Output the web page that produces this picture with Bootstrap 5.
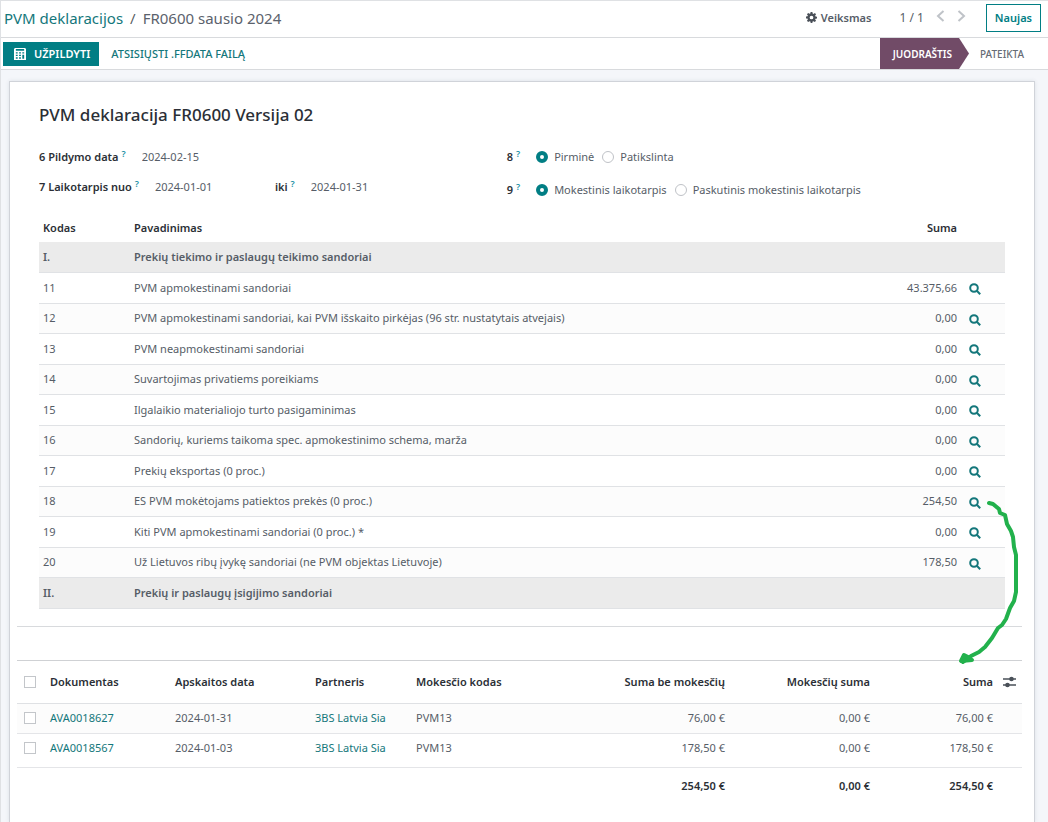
<!DOCTYPE html>
<html lang="lt">
<head>
<meta charset="utf-8">
<meta name="viewport" content="width=device-width, initial-scale=1">
<title>FR0600 sausio 2024</title>
<link href="https://cdn.jsdelivr.net/npm/bootstrap@5.3.0/dist/css/bootstrap.min.css" rel="stylesheet">
<style>
  :root { --teal: #017e84; --link: #14777b; --plum: #714b67; --ink: #2b2f36; --body: #565d67; --line: #d8dadd; }
  body { font-family: "Noto Sans", "Open Sans", sans-serif; font-size: 11px; line-height: 18px; color: var(--body); background: #f4f6fa; border-top: 1px solid #dfe1e4; border-left: 1px solid #dfe1e4; }
  a { color: var(--link); text-decoration: none; }
  .plain-btn { border: 0; background: none; padding: 0; color: inherit; }
  .control-bar { height: 37px; border-bottom: 1px solid var(--line); padding: 0 7px 3px 3px; }
  .status-bar { height: 32px; border-bottom: 1px solid var(--line); padding-left: 2px; }
  .crumbs { font-size: 15px; --bs-breadcrumb-divider: "/"; --bs-breadcrumb-item-padding-x: 7px; }
  .crumbs .active { color: #5b626c; }
  .pager { font-size: 12px; }
  .new-btn { font-size: 11px; line-height: 18px; padding: 4px 8px; border-radius: 0; border: 1px solid var(--teal); color: var(--teal); font-weight: 600; }
  .fill-btn { font-size: 11px; line-height: 16px; padding: 3px 8px 3px 10px; border-radius: 0; border: 1px solid var(--teal); background: var(--teal); color: #fff; font-weight: 600; }
  .load-btn { color: var(--link); font-weight: 500; }
  .stage { font-size: 10px; font-weight: 600; line-height: 30px; height: 31px; }
  .stage-on { background: var(--plum); color: #fff; padding: 0 17px 0 13px; clip-path: polygon(0 0, calc(100% - 10px) 0, 100% 50%, calc(100% - 10px) 100%, 0 100%); }
  .stage-off { padding: 0 24px 0 11px; color: #666c75; font-weight: 500; }
  .sheet { margin: 11px 13px 0 8px; border: 1px solid #d0d3d9; border-bottom: 0; background: #fff; min-height: calc(100vh - 81px); box-shadow: 0 0 4px rgba(60, 70, 90, .12); }
  .sheet-top { padding: 19px 29px 0; }
  .sheet h1 { font-size: 17px; line-height: 28px; font-weight: 500; color: var(--ink); margin-bottom: 19px; }
  .left-fields { width: 48%; }
  .field-label { font-weight: 600; color: var(--ink); }
  .hint { color: #1a8fa5; font-size: 9px; font-weight: 600; position: relative; vertical-align: 4px; line-height: 1; margin-left: 3px; }
  .date-box { border: 0; padding: 0; width: 72px; background: none; color: var(--body); line-height: 18px; }
  .row-a { height: 30px; }
  .row-b { height: 33px; }
  .form-check-input.dot { width: 12px; height: 12px; margin: 0 6px 0 0; border: 1px solid #bfc2c7; box-shadow: none; flex: none; }
  .form-check-input.dot:checked { background: #fff; border: 4px solid var(--teal); }
  .form-check-input.tick { width: 12px; height: 12px; margin: 0; display: block; border: 1px solid #c3c6ca; border-radius: 0; }
  .lines, .docs { table-layout: fixed; width: 100%; margin: 0; --bs-table-color: var(--body); --bs-table-bg: transparent; color: var(--body); border-collapse: collapse; }
  .lines > :not(caption) > * > *, .docs > :not(caption) > * > * { padding: 0 4px; vertical-align: middle; border: 0; box-shadow: none; white-space: nowrap; color: inherit; }
  .lines thead, .docs thead { color: var(--ink); }
  .lines th, .docs th { font-weight: 600; }
  .lines thead tr { height: 28px; }
  .lines tbody tr { height: 31px; border-bottom: 1px solid #e0e2e5; background: #fff; }
  .lines tbody tr:nth-child(odd) { height: 30px; background: #fcfcfc; }
  .lines tbody tr.section-line { background: #ebebeb; font-weight: 600; }
  .lines td svg { display: block; margin: 3px 0 0 4px; color: var(--link); }
  .lower { margin: 17px 12px 0 7px; border-top: 1px solid var(--line); padding-top: 33px; }
  .docs { border-top: 1px solid #cfd1d4; }
  .docs thead tr { height: 43px; border-bottom: 1px solid #dfe1e4; }
  .docs tbody tr { height: 30px; background: #fcfcfc; border-bottom: 1px solid #e4e5e8; }
  .docs tbody tr:last-child { height: 34px; background: #fff; }
  .docs tbody tr:last-child > td { padding-bottom: 4px; }
  .docs tfoot tr { height: 38px; font-weight: 600; color: var(--ink); }
  .docs tr > :first-child { padding-left: 7px; }
  .columns-btn { margin-left: 2px; }
  .sketch-arrow { position: absolute; right: 4px; top: 413px; pointer-events: none; }
</style>
</head>
<body>
<header class="bg-white">
  <div class="control-bar d-flex align-items-center">
    <nav class="me-auto" aria-label="breadcrumb">
      <ol class="breadcrumb crumbs mb-0">
        <li class="breadcrumb-item"><a href="#">PVM deklaracijos</a></li>
        <li class="breadcrumb-item active" aria-current="page">FR0600 sausio 2024</li>
      </ol>
    </nav>
    <button type="button" class="plain-btn d-flex align-items-center fw-semibold me-4">
      <svg class="me-1" width="11" height="11" viewBox="0 0 16 16" fill="#4a5058"><path fill-rule="evenodd" d="M6.700 0h2.600l.4 2.200 1.300.6L12.900 1.500l1.700 1.700-1.300 1.900.6 1.400 2.100.3v2.500l-2.200.4-.5 1.300 1.300 1.900-1.800 1.700-1.800-1.300-1.400.6-.4 2.100H6.800l-.4-2.200-1.400-.5-1.900 1.300-1.700-1.800 1.300-1.800-.6-1.400L0 9.300V6.700l2.200-.4.5-1.300-1.300-1.900 1.800-1.700L5 2.700l1.300-.5zM8 5.300a2.700 2.700 0 1 0 0 5.400 2.700 2.700 0 0 0 0-5.400z"/></svg>Veiksmas
    </button>
    <span class="pager ms-1 me-2">1 / 1</span>
    <button type="button" class="plain-btn px-1" aria-label="Ankstesnis"><svg class="d-block mb-1" width="9" height="12" viewBox="0 0 9 12" fill="none" stroke="#bfc3c8" stroke-width="2"><path d="M7.500 1 2 6l5.500 5"/></svg></button>
    <button type="button" class="plain-btn px-1 ms-1" aria-label="Kitas"><svg class="d-block mb-1" width="9" height="12" viewBox="0 0 9 12" fill="none" stroke="#bfc3c8" stroke-width="2"><path d="M1.500 1 7 6l-5.500 5"/></svg></button>
    <button type="button" class="btn new-btn ms-3">Naujas</button>
  </div>
  <div class="status-bar d-flex align-items-center">
    <button type="button" class="btn fill-btn d-flex align-items-center gap-2">
      <svg width="12" height="12" viewBox="0 0 13 13"><path fill="#fff" fill-rule="evenodd" d="M1 0h11l1 1v12H0V1zM2 1v2h9V1zM2 4.500v1.500h2V4.500zm3.500 0v1.500h2V4.500zm3.500 0v1.500h2V4.500zM2 7.200v1.500h2V7.200zm3.500 0v1.500h2V7.200zm3.500 0v4.500h2V7.200zM2 10v1.700h2V10zm3.500 0v1.700h2V10z"/></svg>
      UŽPILDYTI
    </button>
    <button type="button" class="plain-btn load-btn ms-2 ps-1">ATSISIŲSTI .FFDATA FAILĄ</button>
    <div class="ms-auto d-flex">
      <button type="button" class="plain-btn stage stage-on" aria-current="step">JUODRAŠTIS</button>
      <button type="button" class="plain-btn stage stage-off">PATEIKTA</button>
    </div>
  </div>
</header>
<main class="sheet position-relative">
  <div class="sheet-top">
    <h1>PVM deklaracija FR0600 Versija 02</h1>
    <form class="d-flex">
      <div class="left-fields flex-shrink-0">
        <div class="row-a d-flex align-items-start">
          <label class="field-label" for="fill-date">6 Pildymo data<span class="hint">?</span></label>
          <input class="date-box ms-3" id="fill-date" type="text" value="2024-02-15">
        </div>
        <div class="row-a d-flex align-items-start">
          <label class="field-label" for="from-date">7 Laikotarpis nuo<span class="hint">?</span></label>
          <input class="date-box ms-3 me-5" id="from-date" type="text" value="2024-01-01">
          <label class="field-label" for="to-date">iki<span class="hint">?</span></label>
          <input class="date-box ms-3" id="to-date" type="text" value="2024-01-31">
        </div>
      </div>
      <div class="flex-fill ps-1">
        <div class="row-b d-flex align-items-start" role="group" aria-label="8">
          <span class="field-label me-3">8<span class="hint">?</span></span>
          <label class="d-flex align-items-center me-2"><input class="form-check-input dot" type="radio" name="kind" checked>Pirminė</label>
          <label class="d-flex align-items-center"><input class="form-check-input dot" type="radio" name="kind">Patikslinta</label>
        </div>
        <div class="row-b d-flex align-items-start" role="group" aria-label="9">
          <span class="field-label me-3">9<span class="hint">?</span></span>
          <label class="d-flex align-items-center me-2"><input class="form-check-input dot" type="radio" name="period" checked>Mokestinis laikotarpis</label>
          <label class="d-flex align-items-center"><input class="form-check-input dot" type="radio" name="period">Paskutinis mokestinis laikotarpis</label>
        </div>
      </div>
    </form>
    <table class="table lines">
      <colgroup><col style="width:91px"><col><col style="width:110px"><col style="width:44px"></colgroup>
      <thead><tr><th>Kodas</th><th>Pavadinimas</th><th class="text-end">Suma</th><th></th></tr></thead>
      <tbody id="lines"></tbody>
    </table>
  </div>
  <section class="lower">
    <table class="table docs">
      <colgroup><col style="width:29px"><col style="width:125px"><col style="width:140px"><col style="width:101px"><col style="width:148px"><col><col style="width:145px"><col style="width:123px"><col style="width:25px"></colgroup>
      <thead>
        <tr><th><input class="form-check-input tick" type="checkbox" aria-label="Pažymėti visus"></th><th>Dokumentas</th><th>Apskaitos data</th><th>Partneris</th><th>Mokesčio kodas</th><th class="text-end">Suma be mokesčių</th><th class="text-end">Mokesčių suma</th><th class="text-end">Suma</th>
        <th><button type="button" class="plain-btn columns-btn d-block" aria-label="Stulpeliai"><svg class="d-block" width="13" height="12" viewBox="0 0 13 12"><path d="M0 3h13M0 9h13" stroke="#4a5058" stroke-width="1.500"/><circle cx="8.500" cy="3" r="2.300" fill="#4a5058"/><circle cx="4.500" cy="9" r="2.300" fill="#4a5058"/></svg></button></th></tr>
      </thead>
      <tbody>
        <tr><td><input class="form-check-input tick" type="checkbox" aria-label="AVA0018627"></td><td><a href="#">AVA0018627</a></td><td>2024-01-31</td><td><a href="#">3BS Latvia Sia</a></td><td>PVM13</td><td class="text-end">76,00 €</td><td class="text-end">0,00 €</td><td class="text-end">76,00 €</td><td></td></tr>
        <tr><td><input class="form-check-input tick" type="checkbox" aria-label="AVA0018567"></td><td><a href="#">AVA0018567</a></td><td>2024-01-03</td><td><a href="#">3BS Latvia Sia</a></td><td>PVM13</td><td class="text-end">178,50 €</td><td class="text-end">0,00 €</td><td class="text-end">178,50 €</td><td></td></tr>
      </tbody>
      <tfoot>
        <tr><td colspan="5"></td><td class="text-end">254,50 €</td><td class="text-end">0,00 €</td><td class="text-end">254,50 €</td><td></td></tr>
      </tfoot>
    </table>
  </section>
  <svg class="sketch-arrow" width="80" height="175" viewBox="950 495 80 175" fill="none" stroke="#22b14c" stroke-width="4" stroke-linecap="round" stroke-linejoin="round">
    <path d="M989 503l4 1 6 5 1 4 5 2 2 9 4 7 2 6 1 10 2 8v37l-2 9-4 7-4 11-4 6-4 3-6 10-7 9-6 5-8 4-8 6"/>
    <path fill="#22b14c" d="M964 655l-3 6 11-1-4-3z"/>
  </svg>
</main>
<script src="https://cdn.jsdelivr.net/npm/bootstrap@5.3.0/dist/js/bootstrap.bundle.min.js"></script>
<script>
  const rows = [
    ["I.", "Prekių tiekimo ir paslaugų teikimo sandoriai"],
    ["11", "PVM apmokestinami sandoriai", "43.375,66"],
    ["12", "PVM apmokestinami sandoriai, kai PVM išskaito pirkėjas (96 str. nustatytais atvejais)", "0,00"],
    ["13", "PVM neapmokestinami sandoriai", "0,00"],
    ["14", "Suvartojimas privatiems poreikiams", "0,00"],
    ["15", "Ilgalaikio materialiojo turto pasigaminimas", "0,00"],
    ["16", "Sandorių, kuriems taikoma spec. apmokestinimo schema, marža", "0,00"],
    ["17", "Prekių eksportas (0 proc.)", "0,00"],
    ["18", "ES PVM mokėtojams patiektos prekės (0 proc.)", "254,50"],
    ["19", "Kiti PVM apmokestinami sandoriai (0 proc.) *", "0,00"],
    ["20", "Už Lietuvos ribų įvykę sandoriai (ne PVM objektas Lietuvoje)", "178,50"],
    ["II.", "Prekių ir paslaugų įsigijimo sandoriai"]
  ];
  const lens = '<button type="button" class="plain-btn d-block" aria-label="Peržiūrėti"><svg width="12" height="12" viewBox="0 0 12 12" fill="none" stroke="currentColor" stroke-width="2"><circle cx="5" cy="5" r="3.800"/><path d="M7.800 7.800l3.400 3.400"/></svg></button>';
  document.getElementById("lines").innerHTML = rows.map(([code, name, sum]) => sum
    ? `<tr><td>${code}</td><td>${name}</td><td class="text-end">${sum}</td><td>${lens}</td></tr>`
    : `<tr class="section-line"><td>${code}</td><td>${name}</td><td></td><td></td></tr>`).join("");
</script>
</body>
</html>
